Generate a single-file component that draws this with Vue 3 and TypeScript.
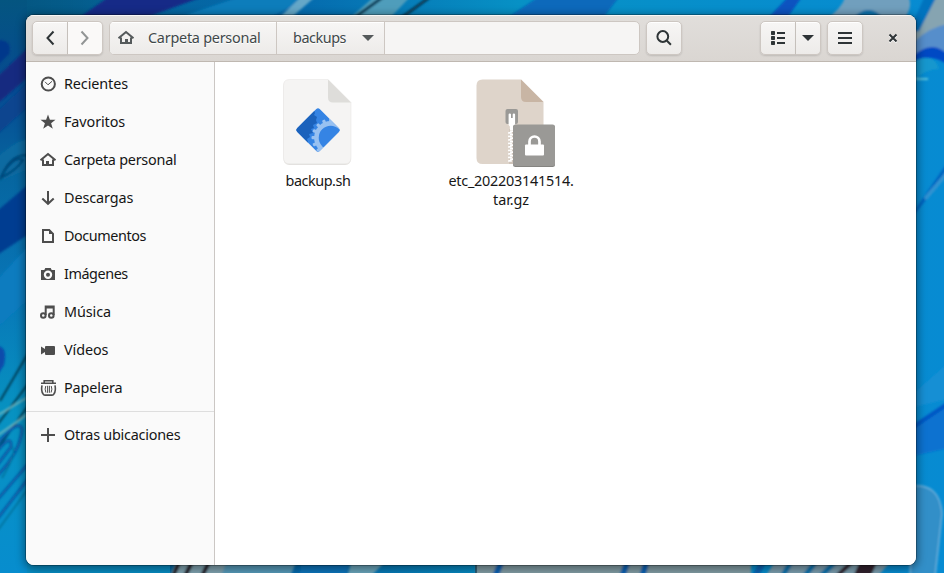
<script setup lang="ts">
interface Place { label: string; icon: string; spacing: string }

const places: Place[] = [
  { label: 'Recientes', icon: 'recent', spacing: 'snug' },
  { label: 'Favoritos', icon: 'star', spacing: 'snug' },
  { label: 'Carpeta personal', icon: 'home', spacing: 'tight' },
  { label: 'Descargas', icon: 'download', spacing: 'snug' },
  { label: 'Documentos', icon: 'document', spacing: 'tighter' },
  { label: 'Imágenes', icon: 'camera', spacing: 'tighter' },
  { label: 'Música', icon: 'music', spacing: 'snug' },
  { label: 'Vídeos', icon: 'video', spacing: 'snug' },
  { label: 'Papelera', icon: 'trash', spacing: 'snug' },
]
const teeth: number[] = Array.from({ length: 16 }, (_, i) => i * 22.5)
const zipTeeth: number[] = Array.from({ length: 9 }, (_, i) => 54 + i * 3.5)
</script>

<template>
  <div class="desktop">
    <svg class="wallpaper" viewBox="0 0 944 573" preserveAspectRatio="none" aria-hidden="true">
      <defs>
        <linearGradient id="sky" x1="0" y1="0" x2="1" y2="0">
          <stop offset="0" stop-color="#04628f" /><stop offset=".3" stop-color="#0568ac" />
          <stop offset=".55" stop-color="#0791c5" /><stop offset="1" stop-color="#078bd2" />
        </linearGradient>
        <linearGradient id="leftEdge" x1="0" y1="0" x2="0" y2="1">
          <stop offset="0" stop-color="#045580" /><stop offset=".15" stop-color="#064a91" />
          <stop offset=".3" stop-color="#06659f" /><stop offset=".5" stop-color="#0875b6" />
          <stop offset=".72" stop-color="#0792c1" /><stop offset="1" stop-color="#078dce" />
        </linearGradient>
        <linearGradient id="topEdge" x1="0" y1="0" x2="1" y2="0">
          <stop offset="0" stop-color="#045580" /><stop offset="1" stop-color="#045580" stop-opacity="0" />
        </linearGradient>
        <filter id="soft"><feGaussianBlur stdDeviation="1.3" /></filter>
      </defs>
      <rect width="944" height="573" fill="url(#sky)" />
      <rect width="150" height="20" fill="url(#topEdge)" />
      <rect y="560" width="170" height="13" fill="#078dc4" />
      <rect width="27" height="573" fill="url(#leftEdge)" />
      <g filter="url(#soft)">
        <path d="M70 24 110 -4H205L128 24Z" fill="#132c87" />
        <path d="M165 22 245 -5H315L260 22Z" fill="#087dbb" />
        <path d="M280 17 301 -3H315L292 17Z" fill="#65a7c8" />
        <path d="M350 18 374 -3H410L390 18Z" fill="#4f9dbb" />
        <path d="M354 18 383 -3M401 18 430 -3" stroke="#073c58" stroke-width="3" />
        <path d="M508 17 540 -4H620L603 18Z" fill="#0769bb" />
        <path d="M768 18 788 -3H802L787 18Z" fill="#0753c0" />
        <path d="M825 20Q842 9 846 -5H908Q914 8 903 20Z" fill="#719fbd" />
        <path d="M852 19Q869 1 884 19Z" fill="#0872ac" />
        <path d="M-4 40Q13 39 9 54L-4 67Z" fill="#05378b" />
        <path d="M-3 77 28 48V77L-3 104Z" fill="#172c80" />
        <path d="M-3 111 28 82V107L-3 135Z" fill="#07458f" />
        <path d="M-4 158Q20 137 29 140V169L-4 183Z" fill="#086aa1" />
        <path d="M0 180Q9 154 28 155M2 175Q14 155 23 160Q16 171 0 178" fill="none" stroke="#044578" stroke-width="2" />
        <path d="M-3 211 29 184V234L-3 255Z" fill="#063c91" />
        <path d="M-3 280 29 245V299L-3 328Z" fill="#087cbf" />
        <path d="M-3 346Q8 346 4 365L-3 376Z" fill="#074bab" />
        <path d="M0 401 29 352M-2 424 28 384M-2 448 28 406" stroke="#053f58" stroke-width="2" />
        <path d="M-2 415 28 397M-2 435 28 414" stroke="#6db4bd" stroke-width="1.7" />
        <path d="M-2 443Q20 417 22 430Q20 452 -2 475M-2 450Q12 433 11 447L-2 464M-2 499 28 464M-2 518 28 479" fill="none" stroke="#075ea8" stroke-width="3" />
        <path d="M2 478Q18 451 12 447M-2 530 28 489" fill="none" stroke="#087099" stroke-width="1.5" />
        <path d="M914 26 930 -4H949V30L914 47Z" fill="#86a4b1" />
        <path d="M908 33 925 -4H937L919 31Z" fill="#0673be" />
        <path d="M914 42Q929 27 948 24V52Q927 47 914 61Z" fill="#578ecb" />
        <path d="M912 57Q932 38 948 55V65Q929 51 912 65Z" fill="#034ac4" />
        <path d="M911 63Q933 50 939 69Q925 69 913 81Z" fill="#1597ce" />
        <path d="M913 79H928" stroke="#5dc4dc" stroke-width="2" />
        <path d="M914 211 949 160V171L914 215Z" fill="#0663c0" />
        <path d="M925 199 948 172" stroke="#3193d1" stroke-width="4" />
        <path d="M914 393 948 363V399L914 407Z" fill="#168fd4" />
        <path d="M913 425 949 402V448L913 456Z" fill="#0872d0" />
        <path d="M913 427 949 403" stroke="#0556c4" stroke-width="4" />
        <path d="M912 486Q940 483 942 514L935 577H910Z" fill="#328fc8" stroke="#6bb0dc" stroke-width="1.5" />
        <path d="M169 578 178 558H240L233 578Z" fill="#80a3b0" />
        <path d="M173 576 181 558M185 576 194 558M202 576 211 558" stroke="#26232e" stroke-width="4" />
        <path d="M221 577 227 560H297L290 577Z" fill="#579ab9" />
        <path d="M299 577 302 560H350L345 577Z" fill="#0874bc" />
        <path d="M347 577 352 560H387L370 577Z" fill="#6aa5bb" />
        <rect x="476" y="560" width="275" height="16" fill="#829da5" />
        <path d="M495 577 502 560M622 577 628 560M642 577 647 560M755 577 764 560" stroke="#0763b2" stroke-width="6" />
        <path d="M765 577 776 560H892L877 577Z" fill="#7b9eaf" />
        <path d="M782 577 792 560M804 577 817 560M820 577 837 560" stroke="#0873ac" stroke-width="5" />
        <path d="M836 577 854 560M855 577 863 560H876L868 577Z" fill="#33232d" stroke="#33232d" stroke-width="4" />
      </g>
      <path d="M476 565V573" stroke="#172b3d" stroke-width="1" />
    </svg>

    <main class="window">
      <header class="headerbar">
        <div class="linked navigation">
          <button class="tool" aria-label="Atrás"><svg viewBox="0 0 16 16"><path d="m11.5 1.5-6 6.5 6 6.5" class="line2" /></svg></button>
          <button class="tool forward" aria-label="Adelante"><svg viewBox="0 0 16 16"><path d="m4.5 1.5 6 6.5-6 6.5" class="line2" /></svg></button>
        </div>
        <nav class="pathbar">
          <button class="crumb crumb-home">
            <svg viewBox="0 0 16 16"><path d="M.5 8.3 8 2l7.5 6.3M3 7.5V13h10V7.5" class="line2" /><path d="M7 9h3v5H7z" /></svg>
            <span class="tight">Carpeta personal</span>
          </button>
          <button class="crumb crumb-current"><span class="tighter">backups</span><svg viewBox="0 0 16 16"><path d="M2 5h12L8 11Z" /></svg></button>
          <div class="path-space"></div>
        </nav>
        <button class="tool single search" aria-label="Buscar"><svg viewBox="0 0 16 16"><circle cx="6.8" cy="6.5" r="5.4" class="line2" /><path d="m10.7 10.5 4.2 4.2" class="line2" /></svg></button>
        <div class="linked views">
          <button class="tool" aria-label="Vista de lista"><svg viewBox="0 0 16 16"><rect x="1" y="1" width="4" height="4" rx=".7" /><rect x="1" y="6" width="4" height="4" rx=".7" /><rect x="1" y="11" width="4" height="4" rx=".7" /><path d="M7 2h8v2H7zm0 5h8v2H7zm0 5h8v2H7z" /></svg></button>
          <button class="tool view-options" aria-label="Opciones"><svg viewBox="0 0 16 16"><path d="M2 5h12L8 11Z" /></svg></button>
        </div>
        <button class="tool single menu" aria-label="Menú"><svg viewBox="0 0 16 16"><path d="M1 2h14v2H1zm0 5h14v2H1zm0 5h14v2H1z" /></svg></button>
        <button class="close" aria-label="Cerrar"><svg viewBox="0 0 16 16"><path d="m4.5 4.5 7 7m0-7-7 7" class="line2" /></svg></button>
      </header>

      <div class="content">
        <aside class="sidebar">
          <div v-for="place in places" :key="place.icon" class="place">
            <svg viewBox="0 0 16 16" aria-hidden="true">
              <template v-if="place.icon === 'recent'"><circle cx="8.3" cy="8" r="6.6" class="line2" /><path d="m5 5.8 3 3 4-3.5" class="line1" /></template>
              <path v-else-if="place.icon === 'star'" d="m8 .6 1.9 5.1H15.5l-4.4 3.5 1.7 5.5L8 11.4l-4.8 3.3 1.7-5.5L.5 5.7h5.6Z" />
              <template v-else-if="place.icon === 'home'"><path d="M.5 8.3 8 2l7.5 6.3M3 7.5V13h10V7.5" class="line2" /><path d="M6 9h3v5H6z" /></template>
              <path v-else-if="place.icon === 'download'" d="M8 1v12.5M2.3 8.5 8 13.8l5.7-5.3" class="line2" />
              <template v-else-if="place.icon === 'document'"><path d="M3 2h6.2L13 5.8V14H3Z" class="line2" /><path d="M9 1.5V6h4.5z" /></template>
              <path v-else-if="place.icon === 'camera'" fill-rule="evenodd" d="M5.3 2h5.4l1 2H15v10H1V4h3.3ZM8 4.5a4.2 4.2 0 1 0 0 8.4 4.2 4.2 0 0 0 0-8.4m0 2.2a2 2 0 1 1 0 4 2 2 0 0 1 0-4" />
              <template v-else-if="place.icon === 'music'"><circle cx="3.3" cy="11.5" r="2.3" class="line2" /><circle cx="11.3" cy="11.5" r="2.3" class="line2" /><path d="M5.7 11V2.5h8V11M5.7 3.5h8" class="line2" /></template>
              <path v-else-if="place.icon === 'video'" d="M1 4.5 5 7V5q0-1 1-1h8q1 0 1 1v7q0 1-1 1H6q-1 0-1-1v-2l-4 2.5Z" />
              <template v-else><path d="M1 3.2h15M4.2 3V.8h8.6V3" class="line-mid" /><path d="M2 5.4Q.9 11 3 13.8q.6 1.3 2 1.3h7q1.4 0 2-1.3 2.1-2.8 1-8.4" class="line-mid" /><path d="M5.8 6q-1.4 3 .1 6.5M11.2 6q1.4 3-.1 6.5M7.6 5.8v7M9.4 5.8v7" class="line1" /></template>
            </svg>
            <span :class="place.spacing">{{ place.label }}</span>
          </div>
          <div class="separator"></div>
          <div class="place"><svg viewBox="0 0 16 16" aria-hidden="true"><path d="M7 1h2v6h6v2H9v6H7V9H1V7h6Z" /></svg><span class="tight">Otras ubicaciones</span></div>
        </aside>

        <section class="files">
          <div class="file script-file">
            <svg class="file-art" viewBox="0 0 100 88" aria-hidden="true">
              <defs>
                <clipPath id="diamond"><rect x="34" y="35" width="32" height="32" rx="2.4" transform="rotate(45 50 51)" /></clipPath>
              </defs>
              <path d="M21.5 1H60L83 24V79.5Q83 86 77 86H21.5Q15.5 86 15.5 79.5V7Q15.5 1 21.5 1Z" fill="#e2e0dd" />
              <path d="M21.5 .5H60L83 23.5V78.5Q83 84.8 77 84.8H21.5Q15.5 84.8 15.5 78.5V6.5Q15.5 .5 21.5 .5Z" fill="#f5f4f3" stroke="#e9e7e5" stroke-width=".6" />
              <path d="M60 .5 83 23.5H65Q60 23.5 60 18.5Z" fill="#deddda" />
              <g clip-path="url(#diamond)">
                <rect x="20" y="20" width="60" height="62" fill="#3584e4" />
                <path d="M20 20H50L46 31l1 3-1 2 3 2-1 3 1 3-4 2 1 3-3 1 2 4-4 1 1 3-3 2 1 3-1 8H20Z" fill="#1b62bc" />
                <g fill="#98c1f1"><circle cx="62.7" cy="58.7" r="16.6" /><rect v-for="angle in teeth" :key="angle" x="61.1" y="39.5" width="3.2" height="5" rx="1" :transform="`rotate(${angle} 62.7 58.7)`" /></g>
                <circle cx="62.7" cy="58.7" r="12" fill="#3584e4" />
              </g>
            </svg>
            <span class="tightest">backup.sh</span>
          </div>
          <div class="file archive-file">
            <svg class="file-art" viewBox="0 0 100 88" aria-hidden="true">
              <path d="M21.5 .5H60L82.5 23V79Q82.5 85 77 85H21.5Q15.5 85 15.5 79V6.5Q15.5 .5 21.5 .5Z" fill="#ded4ca" />
              <path d="M60 .5 82.5 23H65Q60 23 60 18Z" fill="#c8b5a4" />
              <rect x="44.5" y="30" width="12.5" height="15" rx="2" fill="#9a9996" />
              <path d="M48 50h4v35h-4z" fill="#cfc4ba" />
              <g fill="#fff"><rect v-for="y in zipTeeth" :key="y" x="47" :y="y - 1" width="4" height="1.8" rx=".9" /><rect v-for="y in zipTeeth" :key="y + 50" x="48.7" :y="y - 2.8" width="4" height="1.8" rx=".9" /></g>
              <path d="M47.6 46V35.5q0-1 1.2-1t1.2 1V39h1.7v-3.5q0-1 1.2-1t1.2 1V46l-1.2 1.5V51h-4v-3.5Z" fill="#fff" />
              <rect x="52" y="46" width="42" height="42" rx="2.5" fill="#858481" />
              <rect x="52" y="45.5" width="42" height="41.5" rx="2.5" fill="#9a9996" />
              <path d="M68.5 67v-4.5a5 5 0 0 1 10 0V67" fill="none" stroke="#fff" stroke-width="2.7" />
              <rect x="64" y="65.5" width="19" height="11" rx="1" fill="#fff" />
            </svg>
            <span class="tight">etc_202203141514.</span><span class="snug">tar.gz</span>
          </div>
        </section>
      </div>
    </main>
  </div>
</template>

<style>
body { margin: 0; overflow: hidden; }
</style>
<style scoped>
* { box-sizing: border-box; }
.desktop { position: relative; width: 944px; height: 573px; padding: 15px 28px 8px 26px; overflow: hidden; font-family: "Noto Sans", sans-serif; font-size: 14.4px; color: #171717; }
.wallpaper { position: absolute; inset: 0; width: 944px; height: 573px; }
.window { position: relative; display: flex; flex-direction: column; width: 890px; height: 550px; overflow: hidden; border-radius: 8px; background: white; box-shadow: 0 0 0 1px #0004, 0 2px 8px 2px #0006; }
.headerbar { display: flex; align-items: flex-start; flex: 0 0 47px; padding: 6px; border-bottom: 1px solid #bfb8b1; background: linear-gradient(#e1dedb, #dad6d2); box-shadow: inset 0 1px #f8f7f6; }
button { margin: 0; font: inherit; color: #2e3436; }
svg { display: block; fill: currentColor; overflow: visible; }
.line2 { fill: none; stroke: currentColor; stroke-width: 2; }
.line-mid { fill: none; stroke: currentColor; stroke-width: 1.6; }
.line1 { fill: none; stroke: currentColor; stroke-width: 1; }
.linked { display: flex; height: 34px; }
.tool { display: grid; place-items: center; width: 36px; height: 34px; padding: 0 0 1px; border: 1px solid #cdc7c2; border-radius: 5px; background: linear-gradient(#f7f6f5, #edebe9); box-shadow: 0 1px 2px #0002, inset 0 1px #fff; }
.tool svg, .crumb svg { width: 16px; height: 16px; }
.linked .tool:first-child { border-radius: 5px 0 0 5px; }
.linked .tool:last-child { border-left: 0; border-radius: 0 5px 5px 0; }
.navigation .forward { width: 35px; color: #929595; background: #faf9f8; }
.pathbar { display: flex; width: 531px; height: 34px; margin-left: 6px; overflow: hidden; border: 1px solid #cdc7c2; border-radius: 5px; background: #f6f5f4; }
.crumb { display: flex; align-items: center; height: 32px; padding: 0; border: 0; border-right: 1px solid #cdc7c2; background: linear-gradient(#f7f6f5, #edebe9); box-shadow: inset 0 1px white; color: #555a5b; text-shadow: 0 1px white; }
.crumb-home { width: 167px; padding-left: 8px; gap: 14px; }
.crumb-current { width: 108px; padding: 0 8px 0 16px; justify-content: space-between; }
.crumb span { padding-bottom: 2px; color: #414849; white-space: nowrap; }
.search { margin-left: 6px; }
.views { margin-left: 78px; }
.views .view-options { width: 25px; }
.menu { margin-left: 6px; }
.close { display: grid; place-items: center; width: 32px; height: 34px; margin-left: 14px; padding: 0; border: 0; background: transparent; filter: drop-shadow(0 1px white); }
.close svg { width: 16px; height: 16px; }
.content { display: flex; flex: 1; min-height: 0; }
.sidebar { width: 189px; padding-top: 3px; border-right: 1px solid #cbc7c4; background: #fafafa; }
.place { display: flex; align-items: center; gap: 8px; height: 38px; padding-left: 14px; color: #4d4d4d; white-space: nowrap; }
.place > svg { width: 16px; height: 16px; }
.place > span { padding-bottom: 2px; color: #151515; }
.separator { height: 1px; margin: 4px 0; background: #dedede; }
.files { display: flex; flex: 1; padding: 17px 0 0 53px; background: white; }
.file { display: flex; flex-direction: column; align-items: center; width: 100px; height: 140px; white-space: nowrap; line-height: 19px; }
.archive-file { margin-left: 93px; }
.file-art { flex: 0 0 88px; width: 100px; height: 88px; margin-bottom: 4px; }
.snug { letter-spacing: -.1px; }
.tight { letter-spacing: -.24px; }
.tighter { letter-spacing: -.44px; }
.tightest { letter-spacing: -.46px; }
</style>
